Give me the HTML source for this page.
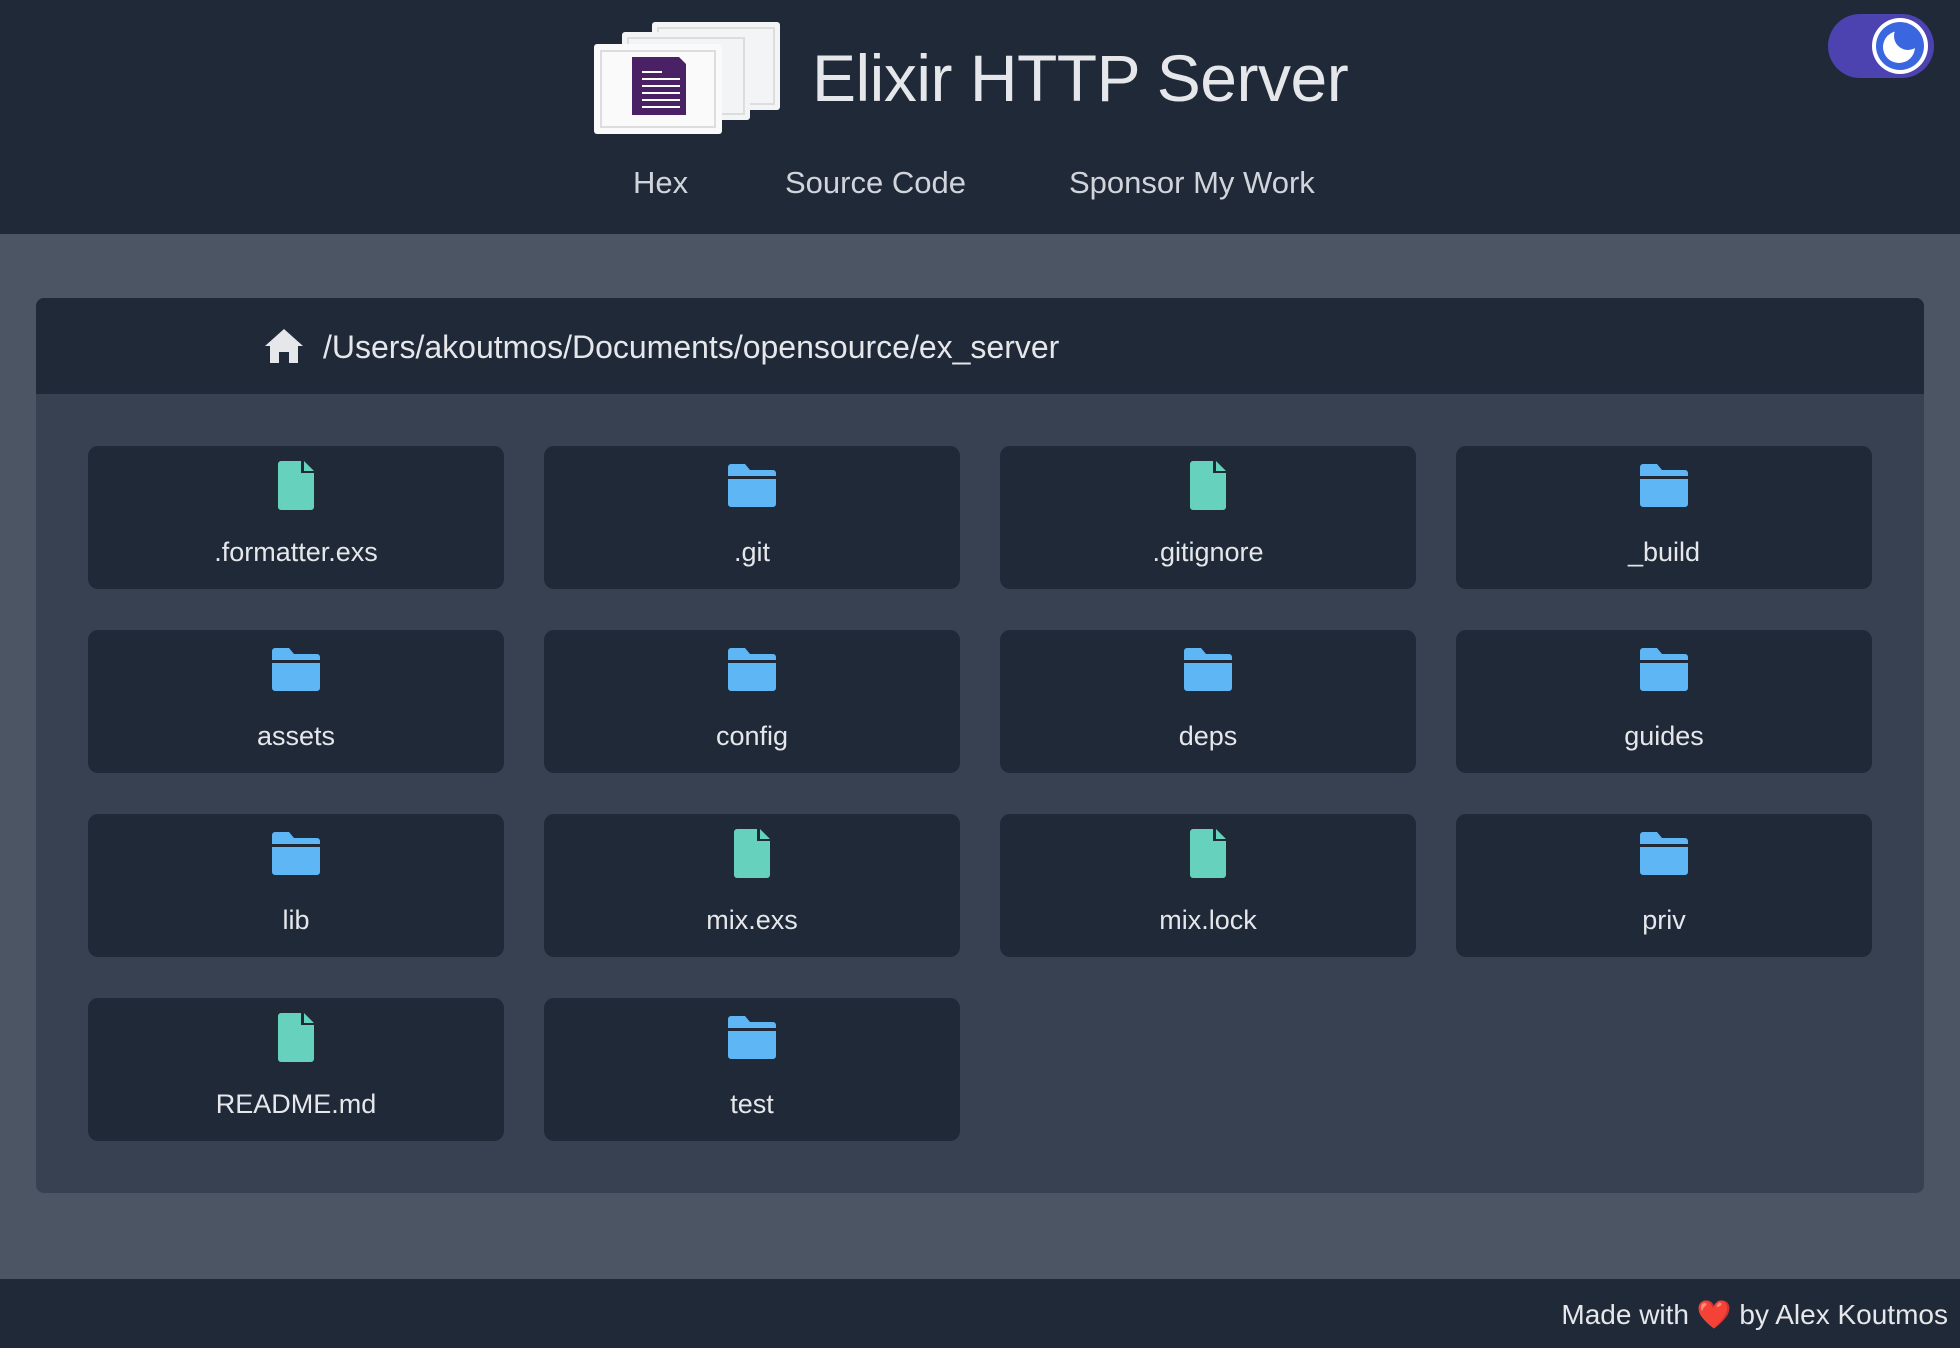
<!DOCTYPE html>
<html><head><meta charset="utf-8"><style>
*{margin:0;padding:0;box-sizing:border-box}
body{width:1960px;height:1348px;background:#4b5563;font-family:"Liberation Sans",sans-serif;position:relative;overflow:hidden}
.hdr{position:absolute;left:0;top:0;width:1960px;height:234px;background:#1f2937}
.title{position:absolute;left:812px;top:40px;font-size:66px;color:#e5e7eb;white-space:nowrap;letter-spacing:-0.5px}
.nav{position:absolute;top:165px;font-size:31px;color:#d1d5db}
.panel{position:absolute;left:36px;top:298px;width:1888px;height:895px;background:#374151;border-radius:8px;overflow:hidden}
.ph{height:96px;background:#1f2937;position:relative}
.path{position:absolute;left:287px;top:31px;font-size:32px;color:#e5e7eb}
.card{position:absolute;width:416px;height:143px;background:#1f2937;border-radius:10px;text-align:center;color:#e5e7eb;font-size:27px}
.card svg{position:absolute;left:50%;top:15px;transform:translateX(-50%)}
.card span{position:absolute;left:0;right:0;top:91px}
.ftr{position:absolute;left:0;top:1279px;width:1960px;height:69px;background:#1f2937}
.ftr div{position:absolute;right:12px;top:19px;font-size:28px;color:#e5e7eb}
</style></head><body>
<div class="hdr">
<svg style="position:absolute;left:592px;top:20px" width="190" height="116" viewBox="0 0 190 116">
<rect x="60" y="2" width="128" height="88" rx="3" fill="#f3f4f6"/><rect x="66" y="8" width="116" height="76" fill="none" stroke="#ddd" stroke-width="2"/>
<rect x="30" y="12" width="128" height="88" rx="3" fill="#f3f4f6"/><rect x="36" y="18" width="116" height="76" fill="none" stroke="#ddd" stroke-width="2"/>
<rect x="2" y="24" width="128" height="90" rx="3" fill="#fafafa"/><rect x="9" y="31" width="114" height="76" fill="none" stroke="#ddd" stroke-width="2"/>
<path d="M40 37 H87 L94 44 V95 H40 Z" fill="#4a2164"/>
<g stroke="#fff" stroke-width="2"><line x1="50" y1="52" x2="70" y2="52"/><line x1="50" y1="59" x2="88" y2="59"/><line x1="50" y1="66" x2="88" y2="66"/><line x1="50" y1="73" x2="88" y2="73"/><line x1="50" y1="80" x2="88" y2="80"/><line x1="50" y1="87" x2="88" y2="87"/></g>
</svg>
<div class="title">Elixir HTTP Server</div>
<div class="nav" style="left:633px">Hex</div>
<div class="nav" style="left:785px">Source Code</div>
<div class="nav" style="left:1069px">Sponsor My Work</div>
<svg style="position:absolute;left:1828px;top:14px" width="106" height="64" viewBox="0 0 106 64">
<defs><mask id="m"><rect width="106" height="64" fill="#fff"/><circle cx="80" cy="22" r="14" fill="#000"/></mask></defs>
<rect x="0" y="0" width="106" height="64" rx="32" fill="#4c43b0"/>
<circle cx="72" cy="32" r="28" fill="#fff"/><circle cx="72" cy="32" r="24" fill="#3a67e0"/>
<circle cx="71" cy="33" r="16" fill="#fff" mask="url(#m)"/>
</svg>
</div>
<div class="panel">
<div class="ph">
<svg style="position:absolute;left:228px;top:28px" width="40" height="40" viewBox="0 0 40 40"><path d="M20 3 L39 20 H34 V37 H25 V26 H15 V37 H6 V20 H1 Z" fill="#e5e7eb"/></svg>
<div class="path">/Users/akoutmos/Documents/opensource/ex_server</div>
</div>
</div>
<div id="cards"></div>
<div class="ftr"><div>Made with <span style="color:#e11d48">❤️</span> by Alex Koutmos</div></div>
<script>
var F='<svg width="36" height="49" viewBox="0 0 36 49"><path d="M3 0 H23 V12 H36 V46 A3 3 0 0 1 33 49 H3 A3 3 0 0 1 0 46 V3 A3 3 0 0 1 3 0 Z M26 0 L36 10 H26 Z" fill="#66d1bd"/></svg>';
var D='<svg width="48" height="44" viewBox="0 0 48 44" style="top:18px"><path d="M3 0 H17 L22 6 H45 A3 3 0 0 1 48 9 V12 H0 V3 A3 3 0 0 1 3 0 Z M0 15 H48 V40 A3 3 0 0 1 45 43 H3 A3 3 0 0 1 0 40 Z" fill="#5fb6f5"/></svg>';
var items=[['.formatter.exs',F],['.git',D],['.gitignore',F],['_build',D],['assets',D],['config',D],['deps',D],['guides',D],['lib',D],['mix.exs',F],['mix.lock',F],['priv',D],['README.md',F],['test',D]];
var h='';items.forEach(function(it,i){var c=i%4,r=Math.floor(i/4);h+='<div class="card" style="left:'+(88+c*456)+'px;top:'+(446+r*184)+'px">'+it[1]+'<span>'+it[0]+'</span></div>';});
document.getElementById('cards').innerHTML=h;
</script>
</body></html>
